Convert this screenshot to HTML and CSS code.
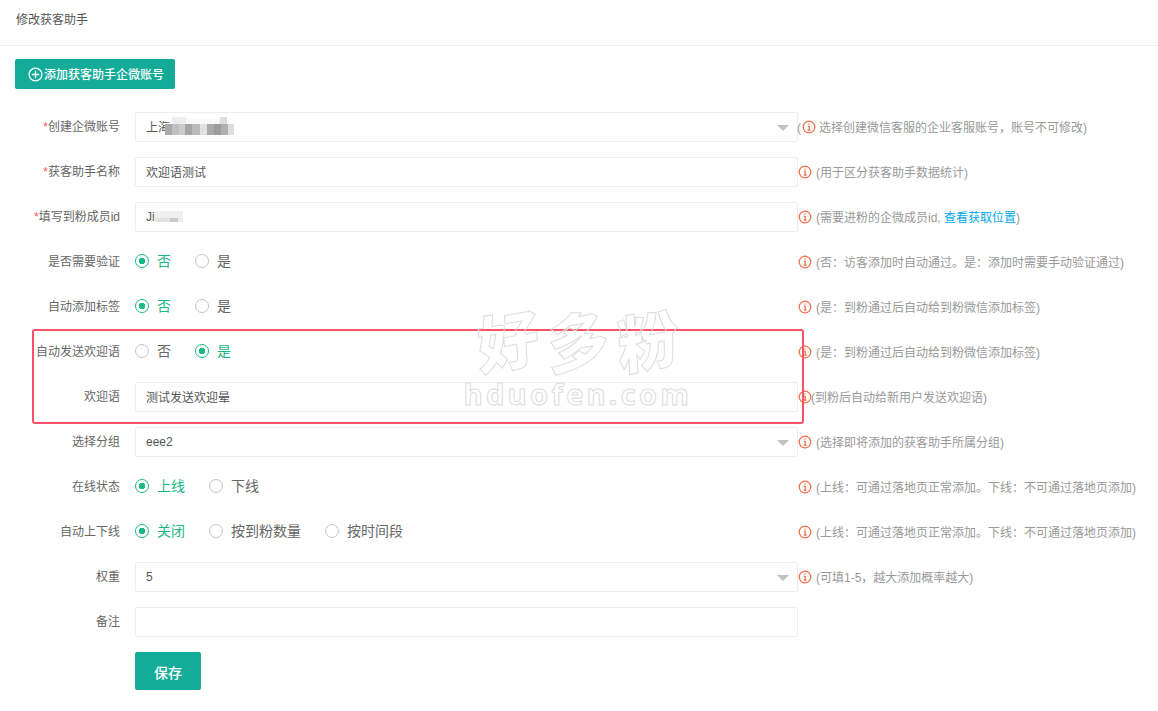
FILE: index.html
```html
<!DOCTYPE html>
<html lang="zh-CN">
<head>
<meta charset="utf-8">
<title>修改获客助手</title>
<link rel="stylesheet" href="styles.css">
</head>
<body>
<header class="page-head">修改获客助手</header>
<main class="content">
  <button class="add-btn" type="button">
    <svg class="add-icon" viewBox="0 0 14 14" aria-hidden="true"><circle cx="7" cy="7" r="6" /><path d="M7 3.6v6.8M3.6 7h6.8" /></svg>添加获客助手企微账号
  </button>
  <form class="form">
    <div class="row">
      <label class="label"><i class="req">*</i>创建企微账号</label>
      <div class="field select"><span>上海</span><svg class="mosaic mosaic-name" width="70" height="20" viewBox="0 0 70 20" aria-hidden="true"><rect x="7" y="0" width="14" height="7" fill="#eee"/><rect x="21" y="2" width="34" height="5" fill="#f8f8f8"/><rect x="55" y="0" width="7" height="7" fill="#ddd"/><rect x="0" y="7" width="7" height="11" fill="#aaa"/><rect x="7" y="7" width="7" height="11" fill="#c0c0c0"/><rect x="14" y="7" width="6" height="11" fill="#ccc"/><rect x="20" y="7" width="7" height="11" fill="#a6a6a6"/><rect x="27" y="7" width="8" height="11" fill="#bbb"/><rect x="35" y="7" width="7" height="11" fill="#e0e0e0"/><rect x="42" y="7" width="7" height="11" fill="#aaa"/><rect x="49" y="7" width="7" height="11" fill="#9c9c9c"/><rect x="56" y="7" width="7" height="11" fill="#b0b0b0"/><rect x="63" y="7" width="6" height="11" fill="#ddd"/></svg></div>
      <div class="hint tight"><span class="hint-text">(</span><svg class="info" viewBox="0 0 14 14"><circle cx="7" cy="7" r="5.8"/><path d="M7 3.4v1.4M5.8 6.3H7.2v3.6M5.6 10h3"/></svg><span class="hint-text">选择创建微信客服的企业客服账号，账号不可修改)</span></div>
    </div>
    <div class="row">
      <label class="label"><i class="req">*</i>获客助手名称</label>
      <div class="field">欢迎语测试</div>
      <div class="hint"><svg class="info" viewBox="0 0 14 14"><circle cx="7" cy="7" r="5.8"/><path d="M7 3.4v1.4M5.8 6.3H7.2v3.6M5.6 10h3"/></svg><span class="hint-text">(用于区分获客助手数据统计)</span></div>
    </div>
    <div class="row">
      <label class="label"><i class="req">*</i>填写到粉成员id</label>
      <div class="field latin"><span>Ji</span><svg class="mosaic mosaic-id" width="28" height="12" viewBox="0 0 28 12" aria-hidden="true"><rect x="0" y="0" width="28" height="7" fill="#efefef"/><rect x="0" y="7" width="15" height="4" fill="#e2e2e2"/><rect x="15" y="7" width="8" height="4" fill="#ccc"/><rect x="23" y="7" width="5" height="4" fill="#eee"/></svg></div>
      <div class="hint"><svg class="info" viewBox="0 0 14 14"><circle cx="7" cy="7" r="5.8"/><path d="M7 3.4v1.4M5.8 6.3H7.2v3.6M5.6 10h3"/></svg><span class="hint-text">(需要进粉的企微成员id, <a class="link">查看获取位置</a>)</span></div>
    </div>
    <div class="row">
      <label class="label">是否需要验证</label>
      <div class="radios"><span class="radio on">否</span><span class="radio">是</span></div>
      <div class="hint"><svg class="info" viewBox="0 0 14 14"><circle cx="7" cy="7" r="5.8"/><path d="M7 3.4v1.4M5.8 6.3H7.2v3.6M5.6 10h3"/></svg><span class="hint-text">(否：访客添加时自动通过。是：添加时需要手动验证通过)</span></div>
    </div>
    <div class="row">
      <label class="label">自动添加标签</label>
      <div class="radios"><span class="radio on">否</span><span class="radio">是</span></div>
      <div class="hint"><svg class="info" viewBox="0 0 14 14"><circle cx="7" cy="7" r="5.8"/><path d="M7 3.4v1.4M5.8 6.3H7.2v3.6M5.6 10h3"/></svg><span class="hint-text">(是：到粉通过后自动给到粉微信添加标签)</span></div>
    </div>
    <div class="highlight">
      <div class="row">
        <label class="label">自动发送欢迎语</label>
        <div class="radios"><span class="radio">否</span><span class="radio on">是</span></div>
        <div class="hint"><svg class="info" viewBox="0 0 14 14"><circle cx="7" cy="7" r="5.8"/><path d="M7 3.4v1.4M5.8 6.3H7.2v3.6M5.6 10h3"/></svg><span class="hint-text">(是：到粉通过后自动给到粉微信添加标签)</span></div>
      </div>
      <div class="row">
        <label class="label">欢迎语</label>
        <div class="field">测试发送欢迎晕</div>
        <div class="hint close"><svg class="info" viewBox="0 0 14 14"><circle cx="7" cy="7" r="5.8"/><path d="M7 3.4v1.4M5.8 6.3H7.2v3.6M5.6 10h3"/></svg><span class="hint-text">(到粉后自动给新用户发送欢迎语)</span></div>
      </div>
    </div>
    <div class="row">
      <label class="label">选择分组</label>
      <div class="field select latin">eee2</div>
      <div class="hint"><svg class="info" viewBox="0 0 14 14"><circle cx="7" cy="7" r="5.8"/><path d="M7 3.4v1.4M5.8 6.3H7.2v3.6M5.6 10h3"/></svg><span class="hint-text">(选择即将添加的获客助手所属分组)</span></div>
    </div>
    <div class="row">
      <label class="label">在线状态</label>
      <div class="radios"><span class="radio on">上线</span><span class="radio">下线</span></div>
      <div class="hint"><svg class="info" viewBox="0 0 14 14"><circle cx="7" cy="7" r="5.8"/><path d="M7 3.4v1.4M5.8 6.3H7.2v3.6M5.6 10h3"/></svg><span class="hint-text">(上线：可通过落地页正常添加。下线：不可通过落地页添加)</span></div>
    </div>
    <div class="row">
      <label class="label">自动上下线</label>
      <div class="radios"><span class="radio on">关闭</span><span class="radio">按到粉数量</span><span class="radio">按时间段</span></div>
      <div class="hint"><svg class="info" viewBox="0 0 14 14"><circle cx="7" cy="7" r="5.8"/><path d="M7 3.4v1.4M5.8 6.3H7.2v3.6M5.6 10h3"/></svg><span class="hint-text">(上线：可通过落地页正常添加。下线：不可通过落地页添加)</span></div>
    </div>
    <div class="row">
      <label class="label">权重</label>
      <div class="field select latin">5</div>
      <div class="hint"><svg class="info" viewBox="0 0 14 14"><circle cx="7" cy="7" r="5.8"/><path d="M7 3.4v1.4M5.8 6.3H7.2v3.6M5.6 10h3"/></svg><span class="hint-text">(可填1-5，越大添加概率越大)</span></div>
    </div>
    <div class="row">
      <label class="label">备注</label>
      <div class="field"></div>
    </div>
    <div class="row">
      <span class="label"></span>
      <button class="save-btn" type="button">保存</button>
    </div>
  </form>
</main>
<div class="watermark" aria-hidden="true">
  <div class="wm-cn"><span>好</span><span>多</span><span>粉</span></div>
  <div class="wm-en">hduofen.com</div>
</div>
</body>
</html>
```
FILE: styles.css
```css
*, *::before, *::after { box-sizing: border-box; }
html, body { margin: 0; padding: 0; }
body {
  background: #fff;
  color: #666;
  font-family: "Liberation Sans", "Noto Sans CJK SC", sans-serif;
  font-size: 12px;
  line-height: 20px;
  position: relative;
  height: 711px;
  overflow: hidden;
}
.page-head {
  height: 46px;
  padding: 10px 15px 0 16px;
  border-bottom: 1px solid #eee;
  color: #555;
}
.content { padding: 13px 0 0 15px; }
.add-btn {
  display: flex;
  align-items: center;
  width: 160px;
  height: 30px;
  padding: 0 0 0 13px;
  border: 0;
  border-radius: 2px;
  background: #14ac99;
  color: #fff;
  font: 500 12px/30px "Noto Sans CJK SC", sans-serif;
}
.add-icon { width: 15px; height: 15px; margin-right: 1px; flex: none; }
.add-icon circle, .add-icon path { fill: none; stroke: #fff; stroke-width: 1.2; }
.form {
  display: flex;
  flex-direction: column;
  gap: 15px;
  margin: 23px 0 0 -15px;
}
.row { display: flex; align-items: center; min-height: 30px; }
.label { flex: none; width: 120px; margin-right: 15px; text-align: right; color: #666; }
.req { color: #f55; font-style: normal; }
.field {
  position: relative;
  flex: none;
  width: 663px;
  height: 30px;
  padding: 0 10px;
  border: 1px solid #eee;
  border-radius: 2px;
  line-height: 30px;
  color: #555;
  background: transparent;
}
.field.latin { line-height: 28px; }
.select::after {
  content: "";
  position: absolute;
  right: 8px;
  top: 12px;
  border-style: solid;
  border-width: 6px 6px 0;
  border-color: #c2c2c2 transparent transparent;
}
.mosaic { vertical-align: top; filter: blur(.7px); }
.mosaic-name { margin: 4px 0 0 -5px; }
.mosaic-id { margin: 8px 0 0 0; }
.radios { flex: none; width: 663px; display: flex; gap: 24px; }
.radio {
  display: flex;
  align-items: center;
  gap: 8px;
  font-size: 14px;
  color: #666;
  position: relative;
  top: -1px;
}
.radio::before {
  content: "";
  width: 14px;
  height: 14px;
  border: 1px solid #c4c4c4;
  border-radius: 50%;
  background: #fff;
}
.radio.on { color: #1ab884; }
.radio.on::before {
  border-color: #1ab884;
  background: radial-gradient(circle, #1ab884 0 3px, #fff 3.5px);
}
.hint {
  display: flex;
  align-items: center;
  flex: none;
  color: #999;
  white-space: nowrap;
}
.hint-text { position: relative; top: 1px; }
.hint.tight { margin-left: -1px; }
.hint.tight .info { margin: 0 3px 0 1px; }
.hint.close .info { margin-right: -1px; }
.info { flex: none; width: 14px; height: 14px; margin-right: 4px; }
.info circle, .info path { fill: none; stroke: #f0704a; stroke-width: 1.25; }
.link { color: #00a9ee; }
.highlight {
  position: relative;
  display: flex;
  flex-direction: column;
  gap: 15px;
}
.highlight::after {
  content: "";
  position: absolute;
  left: 32px;
  top: -8px;
  width: 772px;
  height: 95px;
  border: 2px solid #fb5166;
  border-radius: 3px;
  pointer-events: none;
}
.save-btn {
  width: 66px;
  height: 38px;
  border: 0;
  border-radius: 2px;
  background: #14ac99;
  color: #fff;
  font: 500 14px/38px "Noto Sans CJK SC", sans-serif;
}
.watermark {
  position: absolute;
  left: 458px;
  top: 298px;
  width: 240px;
  pointer-events: none;
  text-align: center;
  color: transparent;
  -webkit-text-stroke: 1px #dcdcdc;
  font-family: "Noto Sans CJK SC", sans-serif;
}
.wm-cn {
  display: flex;
  justify-content: center;
  gap: 8px;
  font-size: 62px;
  line-height: 80px;
  font-weight: 900;
}
.wm-cn span { display: inline-block; transform: rotate(-10deg) skewX(-6deg); }
.wm-en {
  font-size: 29px;
  line-height: 32px;
  letter-spacing: 3.4px;
  font-weight: 700;
  font-family: "Noto Sans", sans-serif;
  white-space: nowrap;
}
```
